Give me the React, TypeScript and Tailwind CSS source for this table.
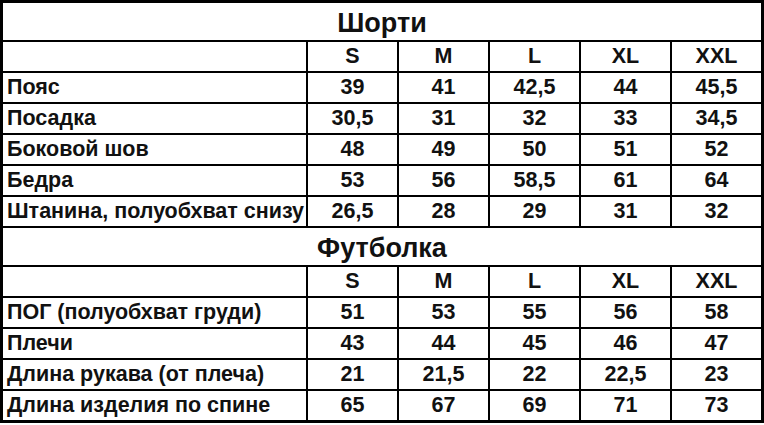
const sizes = ["S", "M", "L", "XL", "XXL"];

const shorts: [string, string[]][] = [
  ["Пояс", ["39", "41", "42,5", "44", "45,5"]],
  ["Посадка", ["30,5", "31", "32", "33", "34,5"]],
  ["Боковой шов", ["48", "49", "50", "51", "52"]],
  ["Бедра", ["53", "56", "58,5", "61", "64"]],
  ["Штанина, полуобхват снизу", ["26,5", "28", "29", "31", "32"]],
];

const tshirt: [string, string[]][] = [
  ["ПОГ (полуобхват груди)", ["51", "53", "55", "56", "58"]],
  ["Плечи", ["43", "44", "45", "46", "47"]],
  ["Длина рукава (от плеча)", ["21", "21,5", "22", "22,5", "23"]],
  ["Длина изделия по спине", ["65", "67", "69", "71", "73"]],
];

function Section({ title, rows }: { title: string; rows: [string, string[]][] }) {
  return (
    <>
      <div className="col-span-6 flex h-[37px] items-center justify-center bg-white pt-[3px] text-[27px] font-bold">
        {title}
      </div>
      <div className="h-[29px] bg-white" />
      {sizes.map((s) => (
        <div key={s} className="flex h-[29px] items-center justify-center bg-white">
          {s}
        </div>
      ))}
      {rows.map(([label, vals]) => (
        <>
          <div key={label} className="flex h-[29px] items-center bg-white pl-[4px] whitespace-nowrap">
            {label}
          </div>
          {vals.map((v, i) => (
            <div key={label + i} className="flex h-[29px] items-center justify-center bg-white">
              {v}
            </div>
          ))}
        </>
      ))}
    </>
  );
}

export default function App() {
  return (
    <div className="h-[425px] w-[764px] bg-white">
      <div
        className="border-[3px] border-black bg-black text-[21.5px] font-bold text-[#111]"
        style={{ fontFamily: '"Liberation Sans", Arial, sans-serif' }}
      >
        <div className="grid grid-cols-[303px_89px_89px_89px_89px_89px] gap-[2px]">
          <Section title="Шорти" rows={shorts} />
          <Section title="Футболка" rows={tshirt} />
        </div>
      </div>
    </div>
  );
}
